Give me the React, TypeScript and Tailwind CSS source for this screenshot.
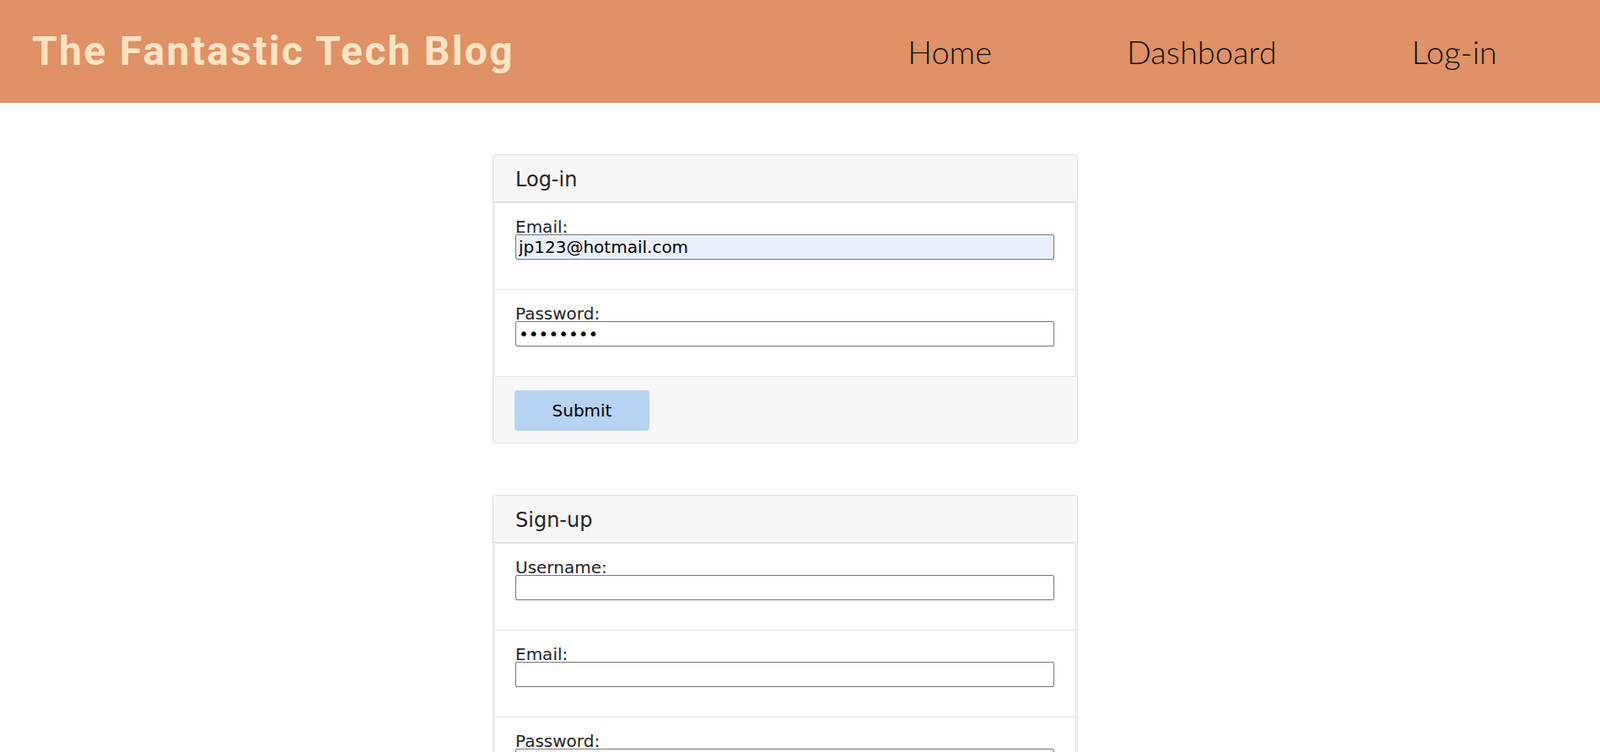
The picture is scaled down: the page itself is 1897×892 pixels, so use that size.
const loginFields = [
  { label: "Email:", type: "email", value: "jp123@hotmail.com", filled: true },
  { label: "Password:", type: "password", value: "abcdefgh", filled: false },
];

const signupFields = [
  { label: "Username:", type: "text", value: "" },
  { label: "Email:", type: "email", value: "" },
  { label: "Password:", type: "password", value: "" },
];

type Field = { label: string; type: string; value: string; filled?: boolean };

function FormCard({ title, fields }: { title: string; fields: Field[] }) {
  return (
    <div className="w-[694px] rounded-[4px] border border-[#dfdfdf] bg-[#f7f7f7]">
      <div className="h-[56px] border-b border-[#dcdcdc] px-[26px] pt-[15px] text-[24px] leading-[28px] text-[#212529]">
        {title}
      </div>
      <div className="mx-[1px] rounded-t-[4px] border border-b-0 border-[#e6e6e6] bg-white">
        {fields.map((f, i) => (
          <div key={i} className="border-b border-[#e3e3e3] px-[24px] pt-[19px] pb-[35px]">
            <label className="block text-[20px] leading-[18px] text-[#212529]">{f.label}</label>
            <input
              type={f.type}
              defaultValue={f.value}
              className={`block h-[30px] w-[639px] rounded-[2px] border border-[#767676] px-[3px] text-[20px] text-black outline-none ${
                f.filled ? "bg-[#e8f0fe]" : "bg-white"
              }`}
            />
          </div>
        ))}
      </div>
      <div className="px-[25px] pt-[16px] pb-[14px]">
        <button className="h-[48px] w-[160px] rounded-[4px] bg-[#b7d3f2] text-[20px] text-black">Submit</button>
      </div>
    </div>
  );
}

export default function App() {
  return (
    <div className="min-h-screen bg-white font-['DejaVu_Sans',sans-serif]">
      <header className="flex h-[122px] items-center justify-between bg-[#e09165] pl-[38px] pr-[122px]">
        <h1 className="font-['Roboto',sans-serif] text-[48px] font-bold tracking-[2.3px] text-[#ffe4c4]">
          The Fantastic Tech Blog
        </h1>
        <nav className="flex gap-[160px] font-['Lato',sans-serif] text-[38px] font-light text-[#111]">
          <a href="#">Home</a>
          <a href="#">Dashboard</a>
          <a href="#">Log-in</a>
        </nav>
      </header>
      <main className="flex flex-col gap-[61px] pt-[61px] pb-[60px] pl-[584px]">
        <FormCard title="Log-in" fields={loginFields} />
        <FormCard title="Sign-up" fields={signupFields} />
      </main>
    </div>
  );
}
